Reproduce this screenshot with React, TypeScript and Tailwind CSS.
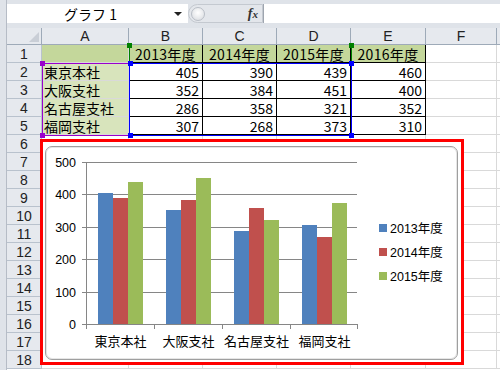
import React from 'react';

const COLS = [87, 74, 74, 74, 75, 71, 40];
const LETTERS = ['A', 'B', 'C', 'D', 'E', 'F', ''];

const DATA: (string | number)[][] = [
  ['', '2013年度', '2014年度', '2015年度', '2016年度'],
  ['東京本社', 405, 390, 439, 460],
  ['大阪支社', 352, 384, 451, 400],
  ['名古屋支社', 286, 358, 321, 352],
  ['福岡支社', 307, 268, 373, 310],
];

const SERIES = [
  { name: '2013年度', color: '#4f81bd', values: [405, 352, 286, 307] },
  { name: '2014年度', color: '#c0504d', values: [390, 384, 358, 268] },
  { name: '2015年度', color: '#9bbb59', values: [439, 451, 321, 373] },
];
const CATEGORIES = ['東京本社', '大阪支社', '名古屋支社', '福岡支社'];

function Cell({ row, col }: { row: number; col: number }) {
  const v = DATA[row]?.[col];
  const inTable = row < 5 && col < 5;
  let bg = '';
  if (inTable && col === 0) bg = row === 0 ? 'bg-[#c4d79b]' : 'bg-[#d8e4bc]';
  else if (inTable && row === 0) bg = 'bg-[#c4d79b]';
  const boxed = inTable && col > 0;
  return (
    <div
      className={`h-[18px] border-b border-r ${boxed ? 'border-black' : 'border-[#d9d9d9]'} ${bg} flex items-center overflow-hidden whitespace-nowrap text-[14px] leading-[16px] ${
        typeof v === 'number' ? 'justify-end pr-[3px]' : row === 0 ? 'justify-center tracking-[0.3px]' : 'pl-[2px]'
      }`}
    >
      {v}
    </div>
  );
}

function Chart() {
  const y0 = 324;
  const k = 0.324;
  const grid = [0, 100, 200, 300, 400, 500];
  const centers = [120.5, 188.5, 256.5, 324.5];
  return (
    <div className="absolute left-[40px] top-[139px] w-[424px] h-[226px] border-[3px] border-[#ff0000] bg-white pl-[2px] pt-[4px] pr-[3px] pb-[2px]">
      <div className="relative h-full w-full rounded-[7px] border border-[#9f9f9f] bg-white shadow-[inset_0_0_0_1px_#e6e6e6]">
        <svg
          className="absolute left-0 top-0"
          width={411}
          height={210}
          viewBox="46 147 411 210"
          style={{ fontFamily: '"Liberation Sans", "Noto Sans CJK JP", sans-serif' }}
        >
          {grid.map((g) => {
            const y = Math.round(y0 - g * k) + 0.5;
            return (
              <g key={g} shapeRendering="crispEdges">
                {g > 0 && <line x1={86} x2={357} y1={y} y2={y} stroke="#868686" />}
                <line x1={82} x2={86} y1={y} y2={y} stroke="#868686" />
                <text x={76} y={y + 4} fontSize={12.5} textAnchor="end" fill="#000">
                  {g}
                </text>
              </g>
            );
          })}
          {CATEGORIES.map((_, i) =>
            SERIES.map((s, j) => {
              const h = s.values[i] * k;
              return (
                <rect
                  key={`${i}-${j}`}
                  x={centers[i] - 22.5 + j * 15}
                  y={y0 - h}
                  width={15}
                  height={h}
                  fill={s.color}
                  shapeRendering="crispEdges"
                />
              );
            })
          )}
          <g shapeRendering="crispEdges" stroke="#868686">
            <line x1={86.5} x2={86.5} y1={162} y2={325} />
            <line x1={86} x2={358} y1={324.5} y2={324.5} />
            {[86.5, 154.5, 222.5, 290.5, 357.5].map((x) => (
              <line key={x} x1={x} x2={x} y1={324} y2={329} />
            ))}
          </g>
          {CATEGORIES.map((c, i) => (
            <text
              key={c}
              x={centers[i]}
              y={346}
              fontSize={13}
              textAnchor="middle"
              fill="#000"
              style={{ fontFamily: '"Noto Sans CJK JP", sans-serif' }}
            >
              {c}
            </text>
          ))}
          {SERIES.map((s, i) => (
            <g key={s.name}>
              <rect x={379} y={224 + i * 24} width={8} height={8} fill={s.color} shapeRendering="crispEdges" />
              <text x={390} y={232.5 + i * 24} fontSize={12.5} fill="#000">
                {s.name}
              </text>
            </g>
          ))}
        </svg>
      </div>
    </div>
  );
}

function Handle({ x, y, color }: { x: number; y: number; color: string }) {
  return <div className={`absolute h-[5px] w-[5px] ${color}`} style={{ left: x - 2, top: y - 2 }} />;
}

export default function App() {
  const rows = Array.from({ length: 18 }, (_, i) => i);
  return (
    <div className="relative flex h-[370px] w-[500px] overflow-hidden bg-white font-['Noto_Sans_CJK_JP',sans-serif] text-black">
      <div className="w-[7px] shrink-0 border-r border-[#b6bcc6] bg-[#dfe3e9]" />
      <div className="flex min-w-0 flex-1 flex-col">
        {/* formula bar */}
        <div className="flex h-[28px] shrink-0 items-start bg-[#dfe3e9] pt-[4px]">
          <div className="flex h-[19px] w-[181px] items-center bg-white">
            <div className="flex-1 text-center text-[14px] leading-[16px]">グラフ 1</div>
            <div className="mr-[6px] h-0 w-0 border-x-[4px] border-t-[4px] border-x-transparent border-t-[#222]" />
          </div>
          <div className="flex h-[19px] w-[75px] items-center justify-between rounded-l-[10px] border border-[#c4c9d0] bg-[#e3e6eb] pr-[4px]">
            <div className="ml-[2px] h-[14px] w-[14px] rounded-full border border-[#b9bec6] bg-[radial-gradient(circle_at_50%_40%,#ffffff,#d6d9de)]" />
            <span className="font-['Liberation_Serif',serif] text-[14px] font-bold italic leading-none text-[#333]">
              f<span className="text-[11px]">x</span>
            </span>
          </div>
          <div className="h-[19px] flex-1 border-l border-[#9ea5af] bg-white" />
        </div>
        {/* grid */}
        <div
          className="grid"
          style={{ gridTemplateColumns: `35px ${COLS.map((c) => `${c}px`).join(' ')}` }}
        >
          <div className="relative h-[17px] border-b border-r border-[#9eaab8] bg-[#e6e9ee]">
            <div className="absolute bottom-[2px] right-[2px] h-0 w-0 border-b-[10px] border-l-[10px] border-b-[#c9ced6] border-l-transparent" />
          </div>
          {LETTERS.map((l, i) => (
            <div
              key={i}
              className="flex h-[17px] items-center justify-center border-b border-r border-[#9eaab8] bg-[#e6e9ee] font-['Liberation_Sans',sans-serif] text-[14px] leading-none text-[#222]"
            >
              {l}
            </div>
          ))}
          {rows.map((r) => (
            <React.Fragment key={r}>
              <div className="flex h-[18px] items-center justify-center border-b border-r border-[#b9c2cd] bg-[#e6e9ee] font-['Liberation_Sans',sans-serif] text-[14px] leading-none text-[#222]">
                {r + 1}
              </div>
              {LETTERS.map((_, c) => (
                <Cell key={c} row={r} col={c} />
              ))}
            </React.Fragment>
          ))}
        </div>
      </div>

      {/* data range highlights */}
      <div className="absolute left-[42px] top-[63px] h-[73px] w-[88px] border border-[#9900cc]" />
      <div className="absolute left-[129px] top-[45px] h-[19px] w-[223px] border-x border-[#008000]" />
      <div className="absolute left-[129px] top-[63px] h-[73px] w-[223px] border border-[#0000ff]" />
      <Handle x={42} y={63} color="bg-[#9900cc]" />
      <Handle x={42} y={135} color="bg-[#9900cc]" />
      <Handle x={129} y={45} color="bg-[#008000]" />
      <Handle x={351} y={45} color="bg-[#008000]" />
      <Handle x={130} y={63} color="bg-[#0000ff]" />
      <Handle x={351} y={63} color="bg-[#0000ff]" />
      <Handle x={130} y={135} color="bg-[#0000ff]" />
      <Handle x={351} y={135} color="bg-[#0000ff]" />

      <Chart />
    </div>
  );
}
